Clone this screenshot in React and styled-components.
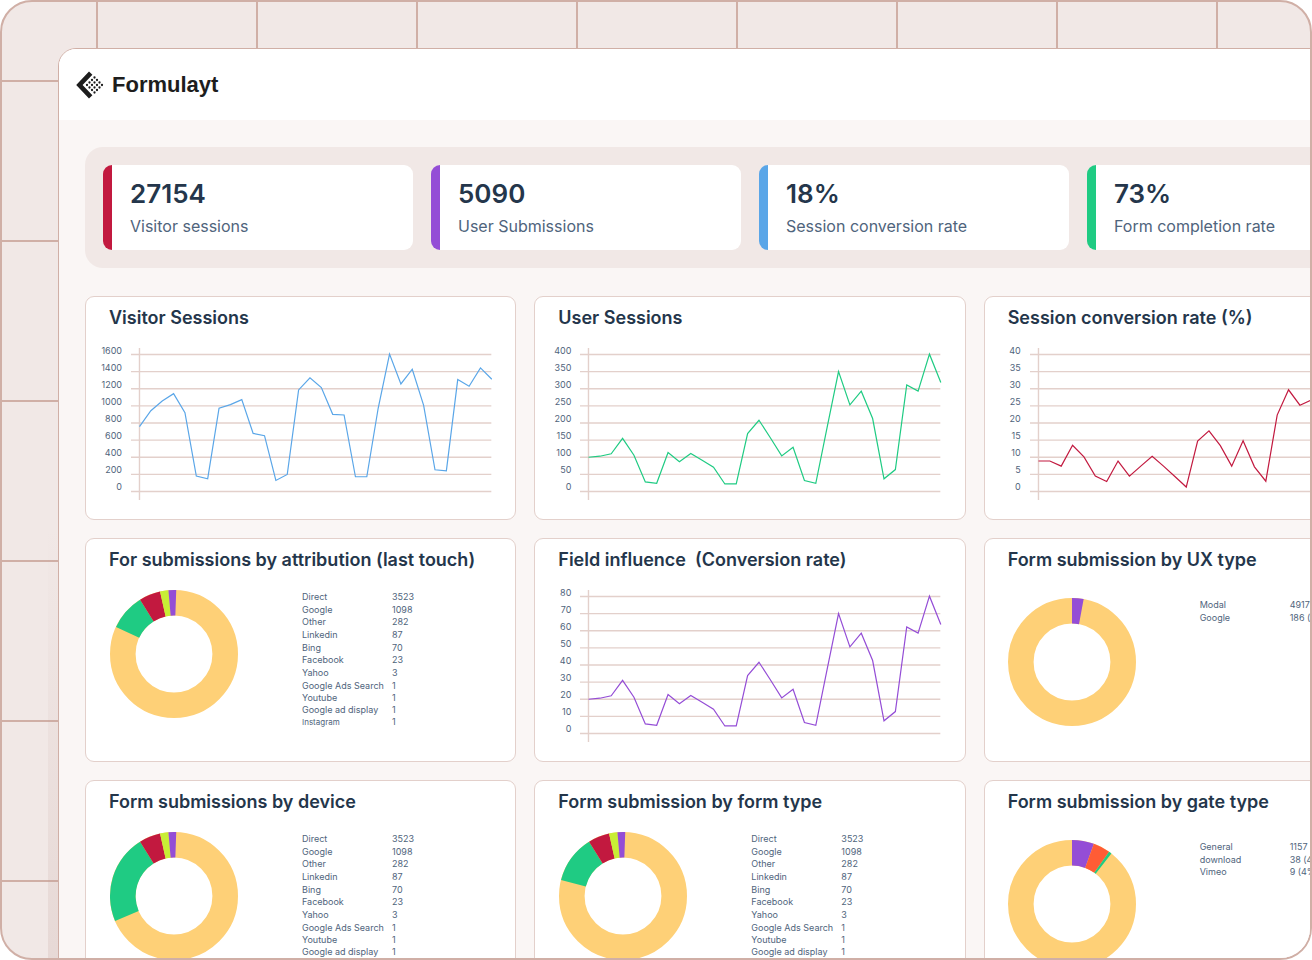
import React from "react";
import styled, { createGlobalStyle } from "styled-components";

const GlobalStyle = createGlobalStyle`
  * {
    box-sizing: border-box;
  }
  body {
    margin: 0;
    background: #ffffff;
    color: #24364b;
    font-family: Inter, "Liberation Sans", sans-serif;
  }
`;

const colors = {
  line: "#d0afa6",
  softLine: "#e3d0cb",
  yellow: "#fed077",
  green: "#1fcb83",
  crimson: "#c2193f",
  lime: "#c8ee35",
  purple: "#944dd6",
  orange: "#ff5c35",
  blue: "#5aa6e8",
};

const Stage = styled.div`
  height: 100vh;
  overflow: hidden;
  border: 2px solid ${colors.line};
  border-radius: 32px;
  background-color: #f1e8e6;
  background-image: linear-gradient(to right, ${colors.line} 2px, transparent 2px),
    linear-gradient(to bottom, ${colors.line} 2px, transparent 2px);
  background-size: 160px 160px;
  background-position: 94px 78px;
`;

/* Runs off the right and bottom edges of the stage, with a faint shade down its left side */
const Backdrop = styled.div`
  margin: 46px -132px 0 46px;
  padding-left: 10px;
  background: linear-gradient(to bottom, transparent 480px, rgba(190, 155, 148, 0.2) 912px);
`;

const Window = styled.div`
  border: 1px solid ${colors.line};
  border-radius: 18px;
  background: #faf6f5;
  overflow: hidden;
`;

const Header = styled.header`
  display: flex;
  align-items: center;
  gap: 8px;
  height: 71px;
  padding: 0 17px;
  background: #ffffff;
`;

const Brand = styled.span`
  color: #1d1d1d;
  font-family: "Liberation Sans", sans-serif;
  font-size: 22px;
  font-weight: 700;
`;

const Content = styled.main`
  display: flex;
  flex-direction: column;
  gap: 28px;
  padding: 27px 26px;
`;

const StatPanel = styled.section`
  display: grid;
  grid-template-columns: repeat(4, minmax(0, 1fr));
  gap: 18px;
  padding: 18px;
  border-radius: 18px;
  background: #f1e8e6;
`;

const StatCard = styled.div`
  padding: 12px 18px;
  border-left: 9px solid ${(props) => props.$accent};
  border-radius: 9px;
  background: #ffffff;
`;

const StatValue = styled.div`
  font-size: 26px;
  font-weight: 600;
  line-height: 33px;
`;

const StatLabel = styled.div`
  margin-top: 4px;
  color: #4f647c;
  font-size: 16px;
  line-height: 24px;
`;

const CardGrid = styled.section`
  display: grid;
  grid-template-columns: repeat(3, minmax(0, 1fr));
  gap: 18px;
`;

const Card = styled.article`
  height: 224px;
  border: 1px solid ${colors.softLine};
  border-radius: 9px;
  background: #ffffff;
`;

const CardTitle = styled.h2`
  margin: 0;
  padding: 8px 23px 0;
  font-size: 18px;
  font-weight: 600;
  line-height: 26px;
  white-space: pre;
`;

const ChartBody = styled.div`
  display: flex;
  gap: 9px;
  padding: 11px 23px 0 8px;
`;

const AxisLabels = styled.ol`
  display: flex;
  flex-direction: column;
  width: 28px;
  margin: 0;
  padding: 0;
  list-style: none;
  color: #4f647c;
  font-size: 9px;
  line-height: 17px;
  text-align: right;
`;

const Plot = styled.svg`
  flex: 1;
  min-width: 0;
  height: 154px;
  margin-top: 6px;
`;

const DonutBody = styled.div`
  display: flex;
  gap: 64px;
  padding: ${(props) => (props.$compact ? "25px 23px 0" : "17px 24px 0")};
`;

const LegendTable = styled.table`
  height: max-content;
  border-collapse: collapse;
  color: #4f647c;
  font-size: 9px;
`;

const LegendRow = styled.tr`
  font-size: ${(props) => (props.$small ? "8px" : "9px")};
  line-height: 13px;
  &:nth-child(3n),
  &:nth-child(n + 9) {
    line-height: 12px;
  }
`;

const LegendName = styled.th`
  width: 90px;
  padding: 0;
  font-weight: 400;
  text-align: left;
  white-space: nowrap;
`;

const LegendValue = styled.td`
  padding: 0;
  font-size: 9px;
  white-space: nowrap;
`;

const stats = [
  { value: "27154", label: "Visitor sessions", accent: colors.crimson },
  { value: "5090", label: "User Submissions", accent: colors.purple },
  { value: "18%", label: "Session conversion rate", accent: colors.blue },
  { value: "73%", label: "Form completion rate", accent: colors.green },
];

const visitorData = [
  757, 944, 1057, 1143, 921, 180, 148, 972, 1015, 1073, 679, 652, 129, 199, 1186, 1327,
  1214, 901, 894, 172, 172, 972, 1604, 1256, 1428, 1007, 254, 242, 1307, 1229, 1444, 1311,
];

const userData = [
  100, 103, 110, 155, 106, 28, 24, 114, 87, 111, 91, 71, 22, 22, 169, 208,
  157, 104, 129, 32, 24, 188, 350, 253, 293, 213, 37, 64, 311, 293, 401, 318,
];

const rateData = [
  8.9, 8.9, 7.4, 13.5, 10.1, 4.5, 2.9, 8.9, 4.5, 7.4, 10.3, 7.4, 4.4, 1.3, 14.7, 17.7,
  13.4, 7.4, 14.8, 7.2, 3, 22.3, 29.7, 25.2, 26.7, 20, 9, 6, 24, 22, 28, 25,
];

const influenceData = userData.map((v) => v / 5);

const sources = [
  { name: "Direct", value: "3523" },
  { name: "Google", value: "1098" },
  { name: "Other", value: "282" },
  { name: "Linkedin", value: "87" },
  { name: "Bing", value: "70" },
  { name: "Facebook", value: "23" },
  { name: "Yahoo", value: "3" },
  { name: "Google Ads Search", value: "1" },
  { name: "Youtube", value: "1" },
  { name: "Google ad display", value: "1" },
  { name: "Instagram", value: "1", small: true },
];

// Slices are [start, end, color] in degrees, clockwise from the top
const sourceSlices = (greenStart) => [
  [greenStart, -32, colors.green],
  [-32, -12.6, colors.crimson],
  [-12.6, -5, colors.lime],
  [-5, 2, colors.purple],
];

const cards = [
  { title: "Visitor Sessions", type: "line", max: 1600, step: 200, data: visitorData, color: colors.blue },
  { title: "User Sessions", type: "line", max: 400, step: 50, data: userData, color: colors.green },
  { title: "Session conversion rate (%)", type: "line", max: 40, step: 5, data: rateData, color: colors.crimson },
  { title: "For submissions by attribution (last touch)", type: "donut", slices: sourceSlices(-65), legend: sources },
  { title: "Field influence  (Conversion rate)", type: "line", max: 80, step: 10, data: influenceData, color: colors.purple },
  {
    title: "Form submission by UX type",
    type: "donut",
    compact: true,
    slices: [[0, 10.5, colors.purple]],
    legend: [
      { name: "Modal", value: "4917 (97%)" },
      { name: "Google", value: "186 (3%)" },
    ],
  },
  { title: "Form submissions by device", type: "donut", slices: sourceSlices(-113), legend: sources },
  { title: "Form submission by form type", type: "donut", slices: sourceSlices(-75.5), legend: sources },
  {
    title: "Form submission by gate type",
    type: "donut",
    compact: true,
    slices: [
      [0, 20, colors.purple],
      [20, 35.4, colors.orange],
      [35.4, 38, colors.green],
    ],
    legend: [
      { name: "General", value: "1157 (92%)" },
      { name: "download", value: "38 (4%)" },
      { name: "Vimeo", value: "9 (4%)" },
    ],
  },
];

const Logo = () => (
  <svg width="28" height="28" viewBox="0 0 28 28" aria-hidden="true">
    <path d="M13 0.4 L16.4 3.8 L6.6 14 L16.4 24.2 L13 27.6 L0.2 14 Z" fill="#1d1d1d" />
    {[0, 1, 2, 3].map((row) =>
      [0, 1, 2, 3].map((col) => (
        <circle
          key={`${row}-${col}`}
          cx={11 + (row + col) * 2.5}
          cy={14 + (row - col) * 2.5}
          r="1.15"
          fill="#1d1d1d"
        />
      ))
    )}
  </svg>
);

const LineChart = ({ title, max, step, data, color }) => {
  const ticks = [];
  for (let t = max; t >= 0; t -= step) ticks.push(t);
  const points = data
    .map((v, i) => `${8.5 + (i * 353) / (data.length - 1)},${143.5 - (v / max) * 137}`)
    .join(" ");

  return (
    <ChartBody>
      <AxisLabels>
        {ticks.map((t) => (
          <li key={t}>{t}</li>
        ))}
      </AxisLabels>
      <Plot viewBox="0 0 362 154" preserveAspectRatio="none" role="img" aria-label={title}>
        {ticks.map((t, i) => (
          <line key={t} x1="0" x2="361" y1={6.5 + i * 17.125} y2={6.5 + i * 17.125} stroke={colors.softLine} strokeWidth="1.4" />
        ))}
        <line x1="8.5" x2="8.5" y1="0" y2="152" stroke={colors.softLine} strokeWidth="1.4" />
        <polyline points={points} fill="none" stroke={color} strokeWidth="1.2" />
      </Plot>
    </ChartBody>
  );
};

const slicePath = (from, to) => {
  const at = (deg, r) => {
    const a = (deg * Math.PI) / 180;
    return `${64 + r * Math.sin(a)} ${64 - r * Math.cos(a)}`;
  };
  return `M${at(from, 64)} A64 64 0 0 1 ${at(to, 64)} L${at(to, 38.4)} A38.4 38.4 0 0 0 ${at(from, 38.4)} Z`;
};

const DonutChart = ({ title, slices, legend, compact }) => (
  <DonutBody $compact={compact}>
    <svg width="128" height="128" viewBox="0 0 128 128" role="img" aria-label={title}>
      <circle cx="64" cy="64" r="51.2" fill="none" stroke={colors.yellow} strokeWidth="25.6" />
      {slices.map(([from, to, color]) => (
        <path key={from} d={slicePath(from, to)} fill={color} />
      ))}
    </svg>
    <LegendTable>
      <tbody>
        {legend.map((item) => (
          <LegendRow key={item.name} $small={item.small}>
            <LegendName scope="row">{item.name}</LegendName>
            <LegendValue>{item.value}</LegendValue>
          </LegendRow>
        ))}
      </tbody>
    </LegendTable>
  </DonutBody>
);

const App = () => {
  return (
    <>
      <GlobalStyle />
      <Stage>
        <Backdrop>
          <Window>
            <Header>
              <Logo />
              <Brand>Formulayt</Brand>
            </Header>
            <Content>
              <StatPanel>
                {stats.map((stat) => (
                  <StatCard key={stat.label} $accent={stat.accent}>
                    <StatValue>{stat.value}</StatValue>
                    <StatLabel>{stat.label}</StatLabel>
                  </StatCard>
                ))}
              </StatPanel>
              <CardGrid>
                {cards.map((card) => (
                  <Card key={card.title}>
                    <CardTitle>{card.title}</CardTitle>
                    {card.type === "line" ? <LineChart {...card} /> : <DonutChart {...card} />}
                  </Card>
                ))}
              </CardGrid>
            </Content>
          </Window>
        </Backdrop>
      </Stage>
    </>
  );
};

export default App;
